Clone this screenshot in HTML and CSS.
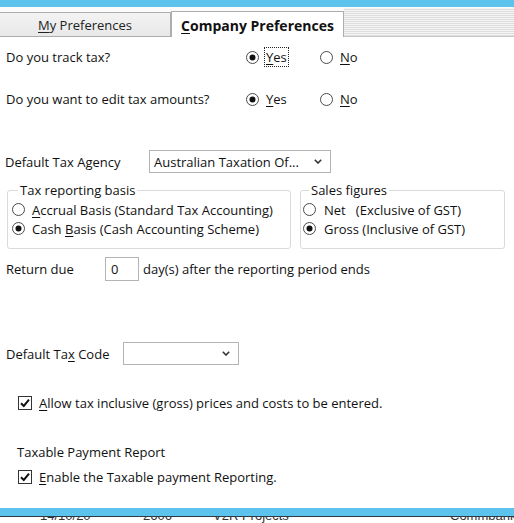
FILE: index.html
```html
<!DOCTYPE html>
<html>
<head>
<meta charset="utf-8">
<link rel="stylesheet" href="styles.css">
</head>
<body>
<div class="topbar"></div>
<div class="tabs">
  <div class="tab mine"><span><u>M</u>y Preferences</span></div>
  <div class="tab active"><span><u>C</u>ompany Preferences</span></div>
  <div class="tab-fill"></div>
</div>
<div class="content">
  <div class="q-row first">
    <span class="q-label">Do you track tax?</span>
    <label class="radio"><svg class="rb" viewBox="0 0 13 13"><circle cx="6.5" cy="6.5" r="6" class="ring"/><circle cx="6.5" cy="6.5" r="3" class="dot"/></svg><span class="focus"><u>Y</u>es</span></label>
    <label class="radio"><svg class="rb" viewBox="0 0 13 13"><circle cx="6.5" cy="6.5" r="6" class="ring"/></svg><span><u>N</u>o</span></label>
  </div>
  <div class="q-row second">
    <span class="q-label">Do you want to edit tax amounts?</span>
    <label class="radio"><svg class="rb" viewBox="0 0 13 13"><circle cx="6.5" cy="6.5" r="6" class="ring"/><circle cx="6.5" cy="6.5" r="3" class="dot"/></svg><span><u>Y</u>es</span></label>
    <label class="radio"><svg class="rb" viewBox="0 0 13 13"><circle cx="6.5" cy="6.5" r="6" class="ring"/></svg><span><u>N</u>o</span></label>
  </div>

  <div class="agency-row">
    <span class="agency-label">Default Tax Agency</span>
    <div class="select agency-select">
      <span class="select-text">Australian Taxation Of...</span>
      <svg class="chev" viewBox="0 0 8 5"><polyline points="0.8,0.8 4,4 7.2,0.8"/></svg>
    </div>
  </div>

  <div class="groups">
    <fieldset class="group basis">
      <legend>Tax reporting basis</legend>
      <label class="radio g-item"><svg class="rb" viewBox="0 0 13 13"><circle cx="6.5" cy="6.5" r="6" class="ring"/></svg><span><u>A</u>ccrual Basis (Standard Tax Accounting)</span></label>
      <label class="radio g-item"><svg class="rb" viewBox="0 0 13 13"><circle cx="6.5" cy="6.5" r="6" class="ring"/><circle cx="6.5" cy="6.5" r="3" class="dot"/></svg><span>Cash <u>B</u>asis (Cash Accounting Scheme)</span></label>
    </fieldset>
    <fieldset class="group sales">
      <legend>Sales figures</legend>
      <label class="radio g-item"><svg class="rb" viewBox="0 0 13 13"><circle cx="6.5" cy="6.5" r="6" class="ring"/></svg><span>Net&nbsp;&nbsp;&nbsp;(Exclusive of GST)</span></label>
      <label class="radio g-item"><svg class="rb" viewBox="0 0 13 13"><circle cx="6.5" cy="6.5" r="6" class="ring"/><circle cx="6.5" cy="6.5" r="3" class="dot"/></svg><span>Gross (Inclusive of GST)</span></label>
    </fieldset>
  </div>

  <div class="due-row">
    <span class="due-label">Return due</span>
    <div class="num-box">0</div>
    <span class="due-text">day(s) after the reporting period ends</span>
  </div>

  <div class="code-row">
    <span class="code-label">Default Ta<u>x</u> Code</span>
    <div class="select code-select">
      <span class="select-text"></span>
      <svg class="chev" viewBox="0 0 8 5"><polyline points="0.8,0.8 4,4 7.2,0.8"/></svg>
    </div>
  </div>

  <label class="check-row allow">
    <svg class="cb" viewBox="0 0 14 14"><rect x="0.5" y="0.5" width="13" height="13" class="box"/><polyline points="3,7.2 5.8,10 11,3.6" class="tick"/></svg>
    <span><u>A</u>llow tax inclusive (gross) prices and costs to be entered.</span>
  </label>

  <div class="tpr-title">Taxable Payment Report</div>
  <label class="check-row enable">
    <svg class="cb" viewBox="0 0 14 14"><rect x="0.5" y="0.5" width="13" height="13" class="box"/><polyline points="3,7.2 5.8,10 11,3.6" class="tick"/></svg>
    <span><u>E</u>nable the Taxable payment Reporting.</span>
  </label>
</div>

<div class="under">
  <div class="under-bar"></div>
  <div class="under-row">
    <span class="c-date">14/10/20</span>
    <span class="c-num">2606</span>
    <span class="c-name">V2R Projects</span>
    <span class="c-acct">Commbank</span>
  </div>
</div>
</body>
</html>
```

FILE: styles.css
```css
html, body {
  margin: 0;
  padding: 0;
}
body {
  width: 514px;
  height: 523px;
  overflow: hidden;
  background: #fff;
  color: #111;
  font-family: "Open Sans", "Noto Sans", "DejaVu Sans", sans-serif;
  font-size: 13px;
  display: flex;
  flex-direction: column;
}
u { text-decoration: underline; text-underline-offset: 2px; }

.topbar {
  height: 7px;
  background: #5cc3ec;
  flex: none;
}
.tabs {
  display: flex;
  align-items: flex-end;
  height: 30px;
  flex: none;
  background: #fbfbfb;
}
.tab {
  box-sizing: border-box;
  height: 25px;
  border: 1px solid #adadad;
  border-bottom: none;
  display: flex;
  align-items: center;
  justify-content: center;
  font-size: 13px;
  color: #222;
}
.tab.mine {
  width: 171px;
  border-left: none;
  background: linear-gradient(#f3f3f3, #e8e8e8);
  border-bottom: 1px solid #adadad;
}
.tab.active {
  width: 173px;
  height: 26px;
  background: #fff;
  font-weight: bold;
  font-size: 14px;
  color: #111;
  padding-top: 1px;
}
.tab-fill {
  flex: 1;
  height: 29px;
  box-sizing: border-box;
  border-bottom: 1px solid #c8c8c8;
  background: repeating-linear-gradient(#f4f4f4 0 1px, #dedede 1px 2px);
}

.content {
  flex: 1;
  padding: 10px 0 0 6px;
  display: flex;
  flex-direction: column;
  align-items: flex-start;
}

.q-row {
  display: grid;
  grid-template-columns: 240px 74px auto;
  height: 20px;
  align-items: center;
}
.q-row.second { margin-top: 22px; }

.radio {
  display: flex;
  align-items: center;
  gap: 7px;
  white-space: nowrap;
}
.rb { width: 13px; height: 13px; flex: none; }
.rb .ring { fill: #fff; stroke: #4a4a4a; stroke-width: 1; }
.rb .dot { fill: #111; }
.focus {
  outline: 1px dotted #222;
  outline-offset: 1px;
  line-height: 16px;
}

.agency-row {
  display: flex;
  align-items: center;
  margin-top: 41px;
  height: 23px;
}
.agency-label { width: 144px; margin-left: -1px; }
.select {
  box-sizing: border-box;
  height: 23px;
  border: 1px solid #b4b4b4;
  background: #fff;
  display: flex;
  align-items: center;
  justify-content: space-between;
  padding: 0 8px 0 4px;
}
.agency-select { width: 182px; }
.code-select { width: 116px; padding-right: 8px; }
.chev { width: 8px; height: 5px; }
.chev polyline { fill: none; stroke: #333; stroke-width: 1.6; }

.groups {
  display: flex;
  gap: 9px;
  margin-top: 9px;
  margin-left: 1px;
}
.group {
  box-sizing: border-box;
  margin: 0;
  border: 1px solid #dadada;
  border-radius: 3px;
  padding: 2px 0 10px 4px;
  min-width: 0;
  display: flex;
  flex-direction: column;
}
.group legend {
  padding: 0 2px;
  margin-left: 6px;
  line-height: 16px;
}
.group.basis { width: 284px; }
.group.sales { width: 205px; padding-left: 2px; }
.group.sales .radio { gap: 8px; }
.g-item { height: 19px; }

.due-row {
  display: flex;
  align-items: center;
  margin-top: 8px;
  height: 24px;
}
.due-label { width: 99px; }
.num-box {
  box-sizing: border-box;
  width: 34px;
  height: 24px;
  border: 1px solid #b4b4b4;
  padding-left: 5px;
  display: flex;
  align-items: center;
}
.due-text { margin-left: 4px; }

.code-row {
  display: flex;
  align-items: center;
  margin-top: 61px;
  height: 23px;
}
.code-label { width: 117px; }

.check-row {
  display: flex;
  align-items: center;
  gap: 7px;
  height: 19px;
  margin-left: 12px;
}
.check-row.allow { margin-top: 28px; }
.check-row.enable { margin-top: 5px; }
.cb { width: 14px; height: 14px; flex: none; }
.cb .box { fill: #fff; stroke: #333; stroke-width: 1; }
.cb .tick { fill: none; stroke: #111; stroke-width: 2; }

.tpr-title {
  margin-top: 31px;
  margin-left: 11px;
  height: 19px;
  line-height: 19px;
}

.under { flex: none; }
.under-bar {
  height: 8px;
  background: #5cc3ec;
  border-bottom: 1px solid #2b3a44;
}
.under-row {
  height: 6px;
  overflow: hidden;
  display: flex;
  align-items: flex-end;
  font-family: "Liberation Sans", Arial, sans-serif;
  font-size: 13px;
  line-height: 14px;
  color: #333;
}
.under-row span { flex: none; white-space: nowrap; }
.c-date { margin-left: 40px; width: 103px; }
.c-num { width: 70px; }
.c-name { width: 237px; }
.c-acct { }
```
